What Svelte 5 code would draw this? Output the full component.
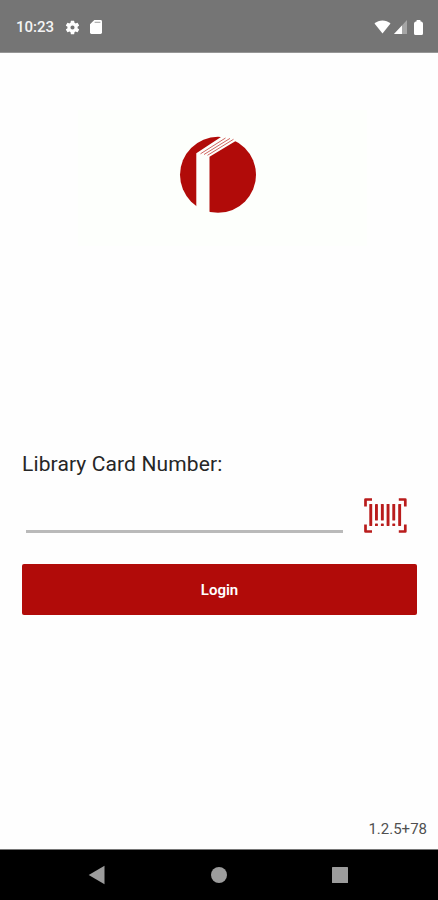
<script lang="ts">
  let cardNumber = $state("");

  // Barcode stripes; short ones end in a dot
  const stripes = [
    { x: 5.3, short: false },
    { x: 11, short: true },
    { x: 16.9, short: true },
    { x: 22.6, short: false },
    { x: 28.3, short: true },
    { x: 34.2, short: false },
  ];
</script>

<div class="screen">
  <header class="status">
    <span class="time">10:23</span>
    <svg class="gear" width="17" height="17" viewBox="0 0 24 24">
      <path
        d="M19.14 12.94c.04-.3.06-.61.06-.94s-.02-.64-.07-.94l2.03-1.58a.49.49 0 0 0 .12-.61l-1.92-3.32a.49.49 0 0 0-.59-.22l-2.39.96a7 7 0 0 0-1.62-.94l-.36-2.54a.48.48 0 0 0-.48-.41h-3.84a.48.48 0 0 0-.47.41l-.36 2.54a7 7 0 0 0-1.62.94l-2.39-.96a.48.48 0 0 0-.59.22L2.74 8.87a.48.48 0 0 0 .12.61l2.03 1.58a6 6 0 0 0 0 1.88l-2.03 1.58a.49.49 0 0 0-.12.61l1.92 3.32c.12.22.37.29.59.22l2.39-.96c.5.38 1.03.7 1.62.94l.36 2.54c.05.24.24.41.48.41h3.84c.24 0 .44-.17.47-.41l.36-2.54a7 7 0 0 0 1.62-.94l2.39.96c.22.08.47 0 .59-.22l1.92-3.32a.48.48 0 0 0-.12-.61zM12 14.9a2.9 2.9 0 1 1 0-5.8 2.9 2.9 0 0 1 0 5.8z"
      />
    </svg>
    <svg class="sd" width="12" height="14" viewBox="0 0 12 14">
      <path d="M4.3 0H10.6Q12 0 12 1.4V12.6Q12 14 10.6 14H1.4Q0 14 0 12.6V4.3z" />
      <path d="M4.6 2.3H10.4" stroke="#a5a5a5" stroke-width="1.1" />
    </svg>
    <span class="spacer"></span>
    <svg class="wifi" width="17" height="14" viewBox="0 0 17 14">
      <path d="M8.5 13.5 0.5 3.6C2.8 1.5 5.5 0.4 8.5 0.4S14.2 1.5 16.5 3.6z" />
    </svg>
    <svg class="signal" width="13" height="14" viewBox="0 0 13 14">
      <path d="M13 0v14H0z" opacity="0.35" />
      <path d="M8 5.4V14H0z" />
    </svg>
    <svg width="9" height="15" viewBox="0 0 9 15">
      <path d="M2.6 1.2V0H6.4V1.2Q9 1.5 9 3.5V13.5Q9 15 7.5 15H1.5Q0 15 0 13.5V3.5Q0 1.5 2.6 1.2z" />
    </svg>
  </header>

  <main>
    <div class="banner">
      <svg width="78" height="78" viewBox="0 0 78 78">
        <circle cx="39" cy="38.8" r="38" fill="#b10b09" />
        <path d="M17.3 17.3 43.5 0H60.5L57.5 4.5 30.5 20.8V78H17.3z" fill="#fdfffc" />
        <path
          d="M21.5 17.8 46.500 2M25 18.500 51 2.400M28.500 19.300 54.500 3.300"
          stroke="#c9534f"
          stroke-width="0.9"
        />
      </svg>
    </div>

    <form onsubmit={(e) => e.preventDefault()}>
      <label for="card">Library Card Number:</label>
      <div class="entry">
        <input id="card" type="text" bind:value={cardNumber} />
        <button type="button" class="scan" aria-label="Scan barcode">
          <svg width="43" height="35" viewBox="0 0 43 35">
            <path
              d="M1.5 8.5V1.5H8M34.8 1.5h6.5v7M1.5 26.5v7H8M34.8 33.5h6.5v-7"
              fill="none"
              stroke="#b91c1c"
              stroke-width="2.7"
              stroke-linejoin="round"
            />
            {#each stripes as s}
              <rect x={s.x} y="6" width="2.9" height={s.short ? 16.5 : 22} rx="0.4" />
              {#if s.short}
                <rect x={s.x} y="25.5" width="2.9" height="2.5" rx="0.6" />
              {/if}
            {/each}
          </svg>
        </button>
      </div>
      <button type="submit" class="login">Login</button>
    </form>

    <p class="version">1.2.5+78</p>
  </main>

  <nav>
    <svg width="18" height="20" viewBox="0 0 18 20"><path d="M16.5 .8v18.4L.7 10z" /></svg>
    <svg width="18" height="18" viewBox="0 0 18 18"><circle cx="9" cy="9" r="8" /></svg>
    <svg width="18" height="18" viewBox="0 0 18 18"><rect x="1" y="1" width="16" height="16" rx="0.5" /></svg>
  </nav>
</div>

<style>
  :global(body) {
    background: #fff;
  }
  .screen {
    display: flex;
    flex-direction: column;
    height: 900px;
    background: #fefefe;
    font-family: Roboto, "Liberation Sans", sans-serif;
    overflow: hidden;
  }
  .status {
    display: flex;
    align-items: center;
    box-sizing: border-box;
    height: 53px;
    padding: 2px 15px 0 16px;
    background: #757575;
    border-bottom: 1px solid #969696;
    color: #f4f4f4;
    flex: none;
  }
  .status svg {
    fill: #fff;
  }
  .time {
    width: 48px;
    font-size: 15px;
    font-weight: 500;
    line-height: 18px;
  }
  .sd {
    margin-left: 9px;
  }
  .spacer {
    flex: 1;
  }
  .signal {
    margin: 0 7px 0 3px;
  }
  main {
    display: flex;
    flex-direction: column;
    flex: 1;
  }
  .banner {
    box-sizing: border-box;
    width: 289px;
    height: 136px;
    margin: 57px 0 0 78px;
    padding: 26px 0 0 101px;
    background: #fdfffc;
  }
  svg {
    display: block;
  }
  form {
    margin: 204px 21px 0 22px;
  }
  label {
    display: block;
    font-size: 21px;
    letter-spacing: 0.12px;
    line-height: 28px;
    color: #262626;
  }
  .entry {
    display: flex;
    align-items: flex-end;
    height: 55px;
    margin-left: 4px;
  }
  input {
    box-sizing: border-box;
    width: 317px;
    height: 42px;
    padding: 0 4px;
    border: 0;
    border-bottom: 3px solid #bababa;
    border-radius: 0;
    background: transparent;
    font: inherit;
    font-size: 20px;
    outline: none;
  }
  button {
    border: 0;
    font: inherit;
  }
  .scan {
    margin-left: 21px;
    padding: 0;
    background: none;
  }
  .scan svg {
    fill: #b91c1c;
  }
  .login {
    display: block;
    width: 395px;
    height: 51px;
    margin-top: 31px;
    border-radius: 2px;
    background: #b10b09;
    color: #fff;
    font-size: 15px;
    font-weight: 600;
  }
  .version {
    margin: auto 11px 11px 0;
    text-align: right;
    font-size: 15px;
    line-height: 18px;
    color: #505050;
  }
  nav {
    display: flex;
    align-items: center;
    justify-content: space-between;
    box-sizing: border-box;
    height: 51px;
    padding: 0 89px 0 88px;
    border-top: 1px solid #777;
    background: #000;
    flex: none;
  }
  nav svg {
    fill: #9c9c9c;
  }
</style>
